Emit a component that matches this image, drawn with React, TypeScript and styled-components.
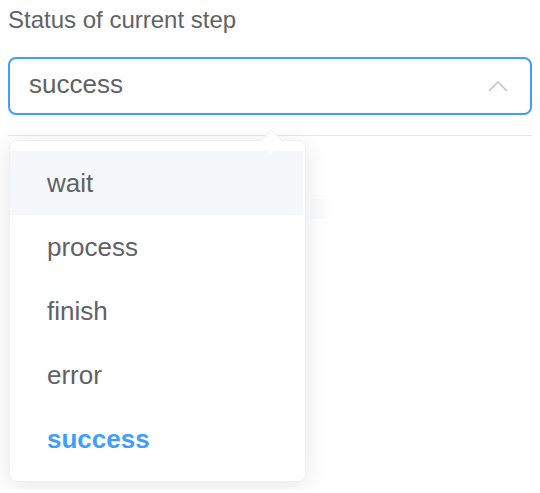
import styled, { createGlobalStyle, css } from "styled-components";

const GlobalStyle = createGlobalStyle`
    body {
        margin: 0;
        background: #ffffff;
        font-family: "Liberation Sans", Arial, sans-serif;
    }
`;

const options = ["wait", "process", "finish", "error", "success"];
const selected = "success";
const hovered = "wait";

export default () => {
    return (
        <Page>
            <GlobalStyle />
            <Label>Status of current step</Label>
            <SelectBox>
                <SelectValue>{selected}</SelectValue>
                <Chevron viewBox="0 0 20 11" width="20" height="11">
                    <polyline
                        points="1,10 10,1 19,10"
                        fill="none"
                        stroke="#c0c4cc"
                        strokeWidth="1.6"
                    />
                </Chevron>
            </SelectBox>
            <Divider />
            <Dropdown>
                <Arrow />
                <Ghost />
                {options.map((name) => (
                    <Option
                        key={name}
                        hover={name === hovered}
                        active={name === selected}
                    >
                        {name}
                    </Option>
                ))}
            </Dropdown>
        </Page>
    );
};

const Page = styled.div`
    padding: 8px;
    display: flex;
    flex-direction: column;
    align-items: stretch;
`;

const Label = styled.div`
    font-size: 24px;
    line-height: 24px;
    color: #606266;
`;

const SelectBox = styled.div`
    margin-top: 25px;
    height: 58px;
    box-sizing: border-box;
    border: 2px solid #409eff;
    border-radius: 8px;
    padding: 0 22px 3px 19px;
    display: flex;
    align-items: center;
    justify-content: space-between;
`;

const SelectValue = styled.span`
    font-size: 26px;
    color: #606266;
`;

const Chevron = styled.svg`
    margin-top: 3px;
`;

const Divider = styled.div`
    margin-top: 20px;
    height: 1px;
    background: #e4e7ed;
`;

const Dropdown = styled.div`
    position: relative;
    margin: 4px 0 0 1px;
    width: 297px;
    box-sizing: border-box;
    padding: 10px 2px 10px 0;
    background: #ffffff;
    border: 1px solid #eef0f4;
    border-radius: 8px;
    box-shadow: 0 4px 24px rgba(0, 0, 0, 0.1);
    display: flex;
    flex-direction: column;
`;

const Arrow = styled.div`
    position: absolute;
    top: -8px;
    left: 253px;
    width: 16px;
    height: 16px;
    background: #ffffff;
    border-top: 1px solid #eef0f4;
    border-left: 1px solid #eef0f4;
    transform: rotate(45deg);
`;

const Ghost = styled.div`
    position: absolute;
    top: 58px;
    left: 300px;
    width: 22px;
    height: 20px;
    background: linear-gradient(to right, #f1f2f4, #ffffff);
`;

const Option = styled.div.attrs({} as { hover: boolean; active: boolean })`
    height: 64px;
    padding-left: 37px;
    display: flex;
    align-items: center;
    font-size: 26px;
    color: #606266;

    ${(props) =>
        props.hover &&
        css`
            background: #f5f7fa;
        `}

    ${(props) =>
        props.active &&
        css`
            color: #409eff;
            font-weight: bold;
        `}
`;
